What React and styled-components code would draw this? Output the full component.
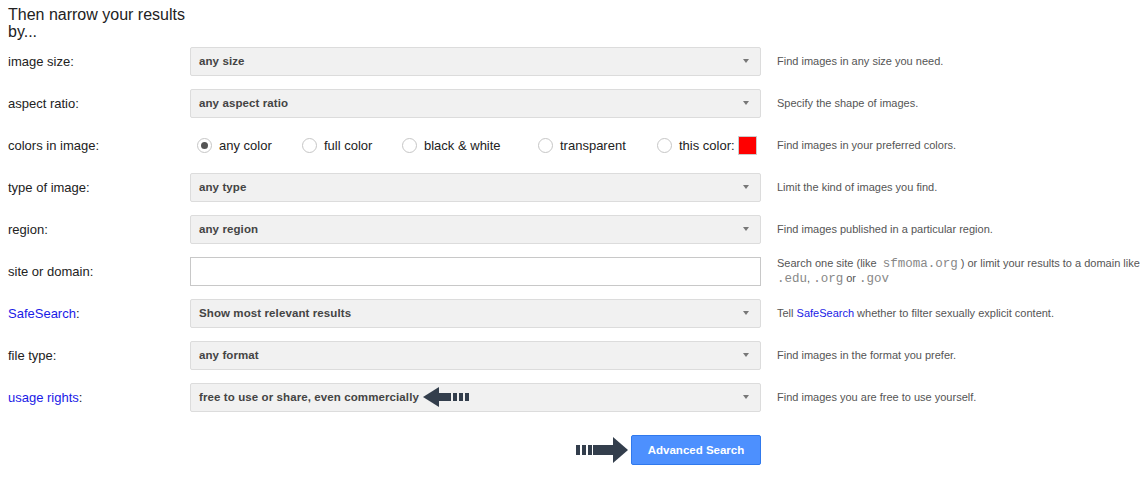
import React from "react";
import styled, { createGlobalStyle } from "styled-components";

const GlobalStyle = createGlobalStyle`
  body {
    margin: 0;
    background: #fff;
    font-family: "Liberation Sans", Arial, sans-serif;
  }
`;

const Page = styled.div`
  padding: 6px 0 0 8px;
`;

const Heading = styled.h3`
  margin: 0;
  width: 190px;
  height: 34px;
  font-size: 16px;
  line-height: 17px;
  font-weight: normal;
  color: #222;
`;

const Row = styled.div`
  display: grid;
  grid-template-columns: 182px 571px 1fr;
  align-items: center;
  height: 42px;
`;

const Label = styled.div`
  font-size: 13px;
  color: #222;
`;

const Link = styled.a`
  color: #1a1ae6;
  text-decoration: none;
`;

const Select = styled.div`
  display: flex;
  align-items: center;
  justify-content: space-between;
  box-sizing: border-box;
  height: 29px;
  padding: 0 8px;
  background: #f1f1f1;
  border: 1px solid #dcdcdc;
  border-radius: 2px;
  font-size: 11.5px;
  letter-spacing: 0.1px;
  font-weight: bold;
  color: #444;
`;

const SelectValue = styled.span`
  display: flex;
  align-items: center;
`;

const Caret = styled.span`
  width: 0;
  height: 0;
  margin-right: 3px;
  border-left: 3.5px solid transparent;
  border-right: 3.5px solid transparent;
  border-top: 4px solid #777;
`;

const TextInput = styled.div`
  box-sizing: border-box;
  height: 29px;
  background: #fff;
  border: 1px solid #c8c8c8;
`;

const Desc = styled.div`
  padding-left: 16px;
  font-size: 11px;
  line-height: 15px;
  color: #555;
`;

const Mono = styled.span`
  font-family: "Liberation Mono", "Courier New", monospace;
  font-size: 12.5px;
  line-height: 1;
  color: #888;
  margin: 0 ${({ $gap }) => $gap || 0}px;
`;

const RadioGroup = styled.div`
  display: flex;
  align-items: center;
  padding-left: 7px;
`;

const Option = styled.label`
  display: flex;
  align-items: center;
  width: ${({ $w }) => ($w ? `${$w}px` : "auto")};
  font-size: 13px;
  color: #222;
`;

const Radio = styled.span`
  box-sizing: border-box;
  width: 15px;
  height: 15px;
  margin-right: 7px;
  border-radius: 50%;
  border: 1px solid #c6c6c6;
  background: #fff;
  display: flex;
  align-items: center;
  justify-content: center;
  &::after {
    content: "";
    display: ${({ $checked }) => ($checked ? "block" : "none")};
    width: 7px;
    height: 7px;
    border-radius: 50%;
    background: #555;
  }
`;

const Swatch = styled.span`
  box-sizing: border-box;
  width: 19px;
  height: 19px;
  margin-left: 3px;
  background: #f00;
  border: 1px solid #ccc;
`;

const Footer = styled.div`
  display: flex;
  justify-content: flex-end;
  align-items: center;
  width: 753px;
  margin-top: 17px;
`;

const Button = styled.button`
  box-sizing: border-box;
  width: 130px;
  height: 30px;
  margin-left: 3px;
  border: 1px solid #3079ed;
  border-radius: 2px;
  background: #4d90fe;
  color: #fff;
  font-family: "Liberation Sans", Arial, sans-serif;
  font-size: 11.5px;
  font-weight: bold;
`;

const ArrowLeft = () => (
  <svg width="46" height="20" viewBox="0 0 46 20" style={{ marginLeft: 4 }}>
    <g fill="#333e4c">
      <polygon points="0,10 16,0 16,20" />
      <rect x="16" y="6" width="12" height="8" />
      <rect x="30" y="6" width="4" height="8" />
      <rect x="36" y="6" width="4" height="8" />
      <rect x="42" y="6" width="4" height="8" />
    </g>
  </svg>
);

const ArrowRight = () => (
  <svg width="52" height="26" viewBox="0 0 52 26">
    <g fill="#333e4c">
      <rect x="0" y="8" width="4" height="10" />
      <rect x="6" y="8" width="4" height="10" />
      <rect x="12" y="8" width="4" height="10" />
      <rect x="17" y="8" width="21" height="10" />
      <polygon points="37,0 52,13 37,26" />
    </g>
  </svg>
);

const SelectRow = ({ label, value, desc, extra }) => (
  <Row>
    <Label>{label}</Label>
    <Select>
      <SelectValue>
        {value}
        {extra}
      </SelectValue>
      <Caret />
    </Select>
    <Desc>{desc}</Desc>
  </Row>
);

const colors = [
  { text: "any color", w: 105, checked: true },
  { text: "full color", w: 100 },
  { text: "black & white", w: 136 },
  { text: "transparent", w: 119 },
];

export default function App() {
  return (
    <Page>
      <GlobalStyle />
      <Heading>Then narrow your results by...</Heading>

      <SelectRow label="image size:" value="any size" desc="Find images in any size you need." />
      <SelectRow label="aspect ratio:" value="any aspect ratio" desc="Specify the shape of images." />

      <Row>
        <Label>colors in image:</Label>
        <RadioGroup>
          {colors.map((c) => (
            <Option key={c.text} $w={c.w}>
              <Radio $checked={c.checked} />
              {c.text}
            </Option>
          ))}
          <Option>
            <Radio />
            this color:
            <Swatch />
          </Option>
        </RadioGroup>
        <Desc>Find images in your preferred colors.</Desc>
      </Row>

      <SelectRow label="type of image:" value="any type" desc="Limit the kind of images you find." />
      <SelectRow label="region:" value="any region" desc="Find images published in a particular region." />

      <Row>
        <Label>site or domain:</Label>
        <TextInput />
        <Desc>
          Search one site (like <Mono $gap={3}>sfmoma.org</Mono>) or limit your results to a domain like{" "}
          <Mono>.edu</Mono>, <Mono>.org</Mono> or <Mono>.gov</Mono>
        </Desc>
      </Row>

      <SelectRow
        label={<><Link>SafeSearch</Link>:</>}
        value="Show most relevant results"
        desc={<>Tell <Link>SafeSearch</Link> whether to filter sexually explicit content.</>}
      />
      <SelectRow label="file type:" value="any format" desc="Find images in the format you prefer." />
      <SelectRow
        label={<><Link>usage rights</Link>:</>}
        value="free to use or share, even commercially"
        extra={<ArrowLeft />}
        desc="Find images you are free to use yourself."
      />

      <Footer>
        <ArrowRight />
        <Button>Advanced Search</Button>
      </Footer>
    </Page>
  );
}
